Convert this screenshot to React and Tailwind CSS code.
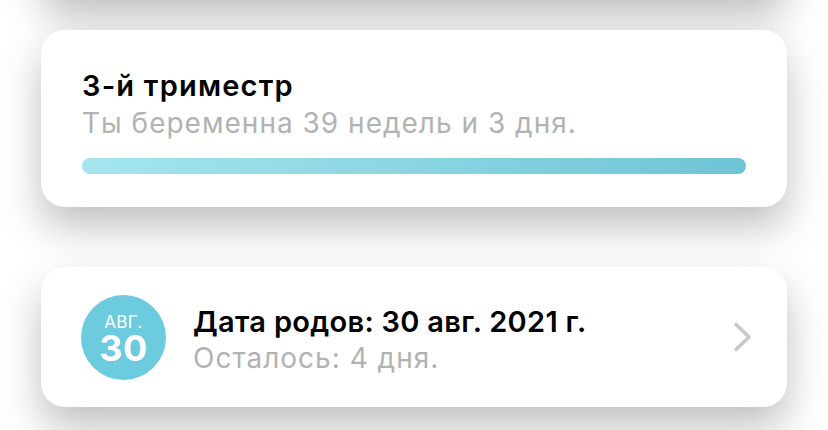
import React from "react";

function Chevron() {
  return (
    <svg width="20" height="30" viewBox="0 0 20 30" fill="none">
      <path d="M3 2.5l13 12.5-13 12.5" stroke="#c7c7cc" strokeWidth="3.5" strokeLinecap="round" strokeLinejoin="round" />
    </svg>
  );
}

export default function App() {
  return (
    <div className="w-[828px] h-[430px] overflow-hidden bg-white" style={{ fontFamily: "Inter, 'Noto Sans', sans-serif" }}>
      <div className="flex flex-col px-[41px]">
        {/* card above, scrolled out of view */}
        <div className="h-[100px] mt-[-103px] rounded-[24px] bg-white shadow-[0_20px_40px_rgba(0,0,0,0.25)]" />

        {/* trimester card */}
        <div className="mt-[33px] h-[177px] rounded-[24px] bg-white shadow-[0_20px_40px_rgba(0,0,0,0.25)] px-[41px] pt-[38px]">
          <div className="text-[29px] leading-[36px] font-semibold text-black tracking-[1.2px]">3-й триместр</div>
          <div className="text-[28px] leading-[36px] text-[#b2b2b2] tracking-[1px] mt-[1px]">Ты беременна 39 недель и 3 дня.</div>
          <div className="mt-[17px] h-[16px] rounded-full bg-gradient-to-r from-[#a6e5ed] to-[#6ec4d5]" />
        </div>

        {/* due date card */}
        <div className="mt-[60px] h-[140px] rounded-[24px] bg-white shadow-[0_20px_40px_rgba(0,0,0,0.25)] flex items-center pl-[40px] pr-[34px]">
          <div className="w-[85px] h-[85px] rounded-full bg-[#6dcbe0] flex flex-col items-center text-white pt-[19px]">
            <div className="text-[17px] leading-[16px] tracking-[0.4px]">АВГ.</div>
            <div className="text-[36px] leading-[30px] font-bold mt-[3px] tracking-[0.5px]">30</div>
          </div>
          <div className="flex-1 ml-[27px] flex flex-col pt-[6px]">
            <div className="text-[29px] leading-[36px] font-semibold text-black tracking-[0.3px]">Дата родов: 30 авг. 2021 г.</div>
            <div className="text-[28px] leading-[36px] text-[#b2b2b2] tracking-[1px]">Осталось: 4 дня.</div>
          </div>
          <Chevron />
        </div>
      </div>
    </div>
  );
}
